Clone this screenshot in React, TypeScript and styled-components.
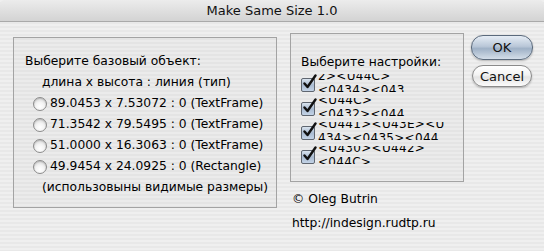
import React from 'react';
import styled, { createGlobalStyle } from 'styled-components';

const Global = createGlobalStyle`
  html, body {
    margin: 0;
    padding: 0;
    background: #ececec;
  }
  body {
    font-family: "DejaVu Sans", "Noto Sans", sans-serif;
    color: #000;
  }
`;

const Window = styled.div`
  width: 544px;
  height: 251px;
  overflow: hidden;
  background: repeating-linear-gradient(
    to bottom,
    #efefef 0,
    #efefef 2px,
    #e8e8e8 2px,
    #e8e8e8 4px
  );
  display: flex;
  flex-direction: column;
`;

const TitleBar = styled.div`
  height: 21px;
  flex: none;
  border-radius: 5px 5px 0 0;
  background: linear-gradient(to bottom, #ececec, #d3d3d3);
  border-bottom: 1px solid #a9a9a9;
  display: flex;
  align-items: center;
  justify-content: center;
  font-size: 13px;
  color: #111;
`;

const Body = styled.div`
  display: flex;
  align-items: flex-start;
  padding: 11px 0 0 13px;
`;

const GroupBox = styled.div<{ $w: number; $top: number }>`
  width: ${(p) => p.$w}px;
  margin-top: ${(p) => p.$top}px;
  box-sizing: border-box;
  border: 1px solid #a3a3a3;
  background: rgba(0, 0, 0, 0.015);
`;

const LeftBox = styled(GroupBox)`
  padding: 13px 0 9px 11px;
  font-size: 12.3px;
  line-height: 21px;
`;

const Line = styled.div<{ $indent?: number }>`
  padding-left: ${(p) => p.$indent || 0}px;
  white-space: nowrap;
`;

const RadioRow = styled.label`
  display: flex;
  align-items: center;
  gap: 3px;
  padding-left: 8px;
  white-space: nowrap;
`;

const Radio = styled.span`
  width: 14px;
  height: 14px;
  flex: none;
  box-sizing: border-box;
  border-radius: 50%;
  border: 1px solid #8b8b8b;
  background: radial-gradient(circle at 50% 70%, #ffffff 0, #f4f4f4 40%, #c9c9c9 100%);
  box-shadow: inset 0 1px 1px rgba(0, 0, 0, 0.15);
`;

const RightCol = styled.div`
  margin-left: 13px;
  display: flex;
  flex-direction: column;
`;

const RightBox = styled(GroupBox)`
  padding: 19px 0 14px 10px;
  font-size: 12.3px;
`;

const BoxTitle = styled.div`
  line-height: 18px;
`;

const CheckRow = styled.div`
  height: 24px;
  display: flex;
  align-items: center;
`;

const CheckBox = styled.span`
  position: relative;
  width: 14px;
  height: 14px;
  flex: none;
  box-sizing: border-box;
  margin-top: 3px;
  border: 1px solid #5f6670;
  border-radius: 2px;
  background: linear-gradient(to bottom, #d9e3ee 0, #a9bbd1 50%, #c3d3e6 100%);
  svg {
    position: absolute;
    left: 0;
    top: -5px;
  }
`;

/* the option labels are drawn clipped, as in the original dialog */
const Clip = styled.div`
  height: 18px;
  margin-left: 3px;
  overflow: hidden;
  font-size: 12px;
  line-height: 14px;
  letter-spacing: 0.3px;
  white-space: nowrap;
`;

const ClipText = styled.div`
  margin-top: -5px;
`;

const Credits = styled.div`
  margin-top: 5px;
  padding-left: 2px;
  font-size: 12.3px;
  line-height: 24px;
`;

const Buttons = styled.div`
  margin: 2px 0 0 7px;
  display: flex;
  flex-direction: column;
  align-items: center;
  gap: 5px;
`;

const Button = styled.div<{ $primary?: boolean }>`
  width: ${(p) => (p.$primary ? 62 : 60)}px;
  height: ${(p) => (p.$primary ? 25 : 22)}px;
  box-sizing: border-box;
  border-radius: 12px;
  border: 1px solid ${(p) => (p.$primary ? '#5b6a7c' : '#8a8a8a')};
  background: ${(p) =>
    p.$primary
      ? 'linear-gradient(to bottom, #e6edf5 0, #b9c7d8 45%, #9fb1c6 55%, #d4dee9 100%)'
      : 'linear-gradient(to bottom, #ffffff 0, #f3f3f3 45%, #e4e4e4 55%, #fbfbfb 100%)'};
  box-shadow: 0 1px 2px rgba(0, 0, 0, 0.25);
  display: flex;
  align-items: center;
  justify-content: center;
  font-size: 13px;
  color: #111;
`;

const Check = () => (
  <svg width="16" height="16" viewBox="0 0 16 16">
    <path
      d="M2.5 9.5 L5.5 13 L13.5 1.5"
      fill="none"
      stroke="#111"
      strokeWidth="2.4"
      strokeLinecap="round"
      strokeLinejoin="round"
    />
  </svg>
);

const sizes = [
  '89.0453 x 7.53072 : 0 (TextFrame)',
  '71.3542 x 79.5495 : 0 (TextFrame)',
  '51.0000 x 16.3063 : 0 (TextFrame)',
  '49.9454 x 24.0925 : 0 (Rectangle)',
];

const options = [
  ['2><U44C>', '<0434><043'],
  ['<U44C>', '<0432><044'],
  ['<U441><U43E><U', '434><0435><044'],
  ['<U430><U442>', '<044C>'],
];

const App = () => {
  return (
    <Window>
      <Global />
      <TitleBar>Make Same Size 1.0</TitleBar>
      <Body>
        <LeftBox $w={264} $top={4}>
          <Line>Выберите базовый объект:</Line>
          <Line $indent={17}>длина x высота : линия (тип)</Line>
          {sizes.map((s) => (
            <RadioRow key={s}>
              <Radio />
              {s}
            </RadioRow>
          ))}
          <Line $indent={17}>(использовыны видимые размеры)</Line>
        </LeftBox>
        <RightCol>
          <RightBox $w={174} $top={0}>
            <BoxTitle>Выберите настройки:</BoxTitle>
            {options.map(([a, b]) => (
              <CheckRow key={a}>
                <CheckBox>
                  <Check />
                </CheckBox>
                <Clip>
                  <ClipText>
                    {a}
                    <br />
                    {b}
                  </ClipText>
                </Clip>
              </CheckRow>
            ))}
          </RightBox>
          <Credits>
            <div>© Oleg Butrin</div>
            <div>http://indesign.rudtp.ru</div>
          </Credits>
        </RightCol>
        <Buttons>
          <Button $primary>OK</Button>
          <Button>Cancel</Button>
        </Buttons>
      </Body>
    </Window>
  );
};

export default App;
